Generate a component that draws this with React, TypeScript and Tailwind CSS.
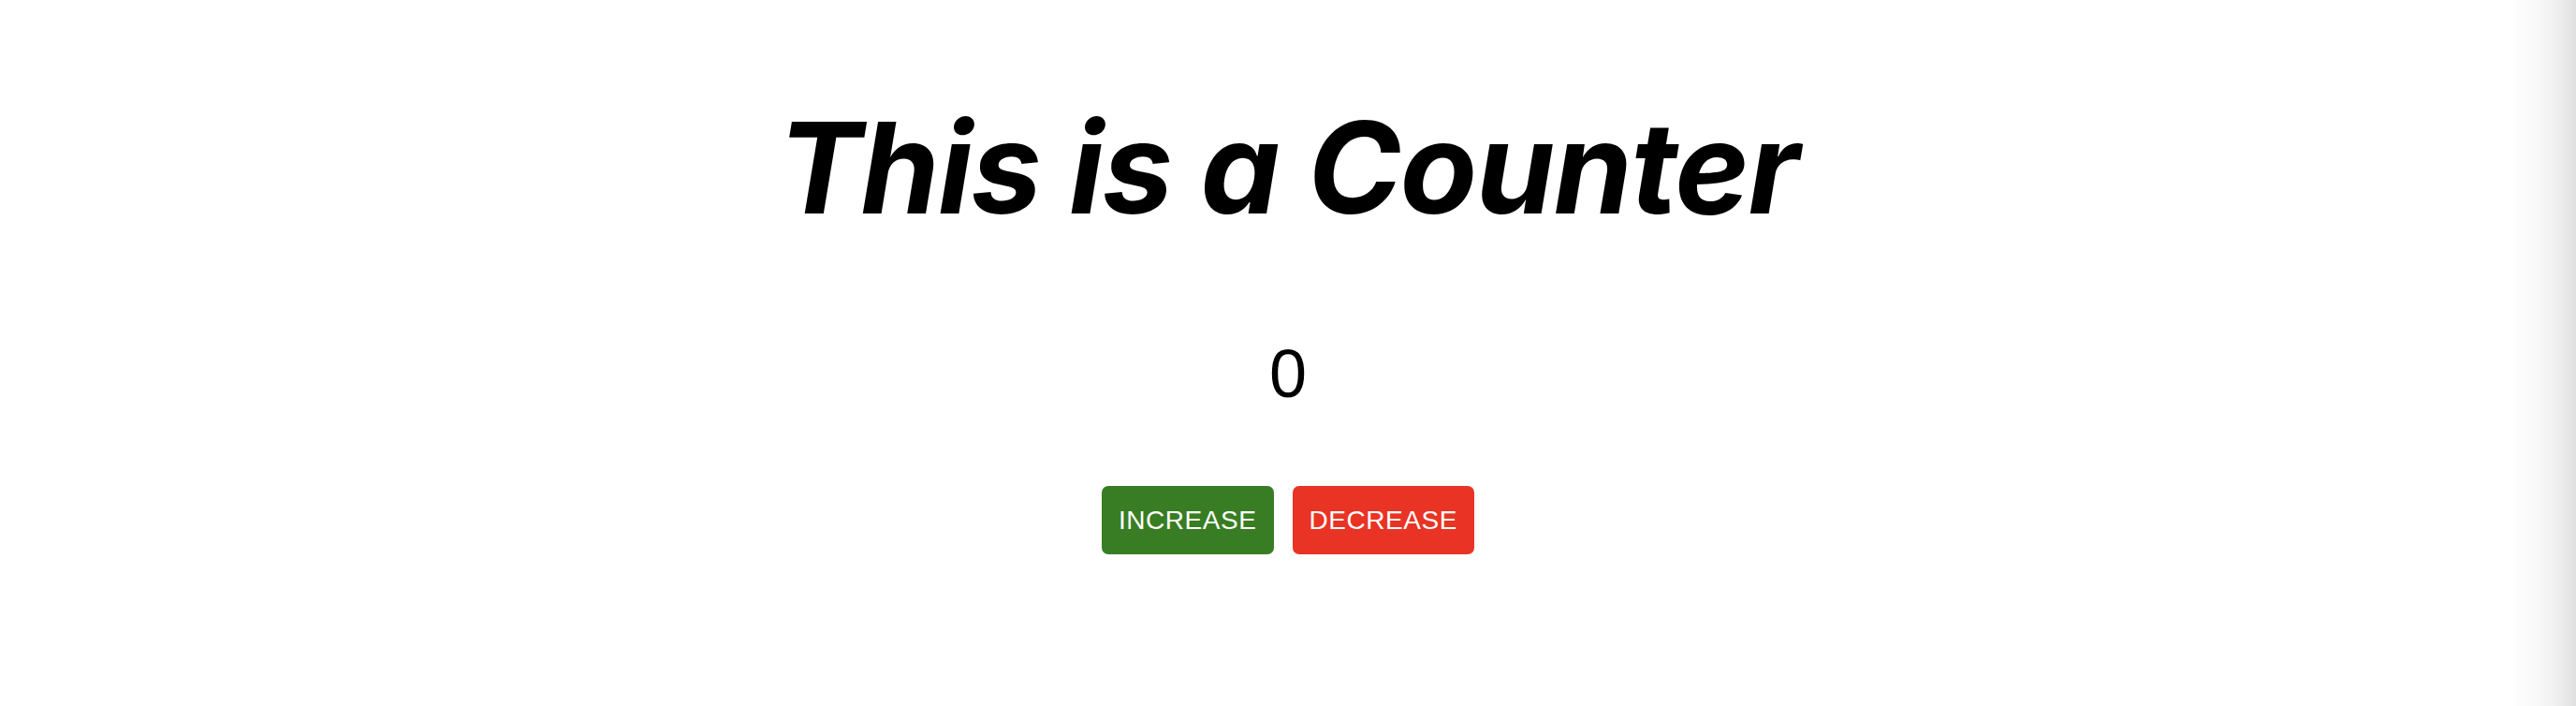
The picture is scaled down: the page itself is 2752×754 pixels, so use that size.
import { useState } from "react";

export default function App() {
  const [count, setCount] = useState(0);

  return (
    <div className="relative min-h-[754px] w-full overflow-hidden bg-white">
      <div className="flex flex-col items-center pt-[112px]">
        <h1 className="font-['Inter',sans-serif] text-[135px] font-bold italic leading-none tracking-[-0.01em] text-black">
          This is a Counter
        </h1>

        <div className="mt-[116px] font-['Liberation_Sans',Arial,sans-serif] text-[72px] leading-none text-black">
          {count}
        </div>

        <div className="mt-[84px] flex gap-5 font-['Liberation_Sans',Arial,sans-serif]">
          <button
            onClick={() => setCount(count + 1)}
            className="flex h-[73px] items-center rounded-[7px] bg-[#387d23] px-[18px] text-[28px] uppercase tracking-[0.02em] text-white"
          >
            Increase
          </button>
          <button
            onClick={() => setCount(count - 1)}
            className="flex h-[73px] items-center rounded-[7px] bg-[#e93324] px-[18px] text-[28px] uppercase tracking-[0.02em] text-white"
          >
            Decrease
          </button>
        </div>
      </div>

      {/* window edge shadow */}
      <div className="pointer-events-none absolute inset-y-0 right-0 w-[72px] bg-[linear-gradient(90deg,#ffffff_0%,#fafafa_35%,#f0f0f0_70%,#e0e0e0_100%)]" />
    </div>
  );
}
